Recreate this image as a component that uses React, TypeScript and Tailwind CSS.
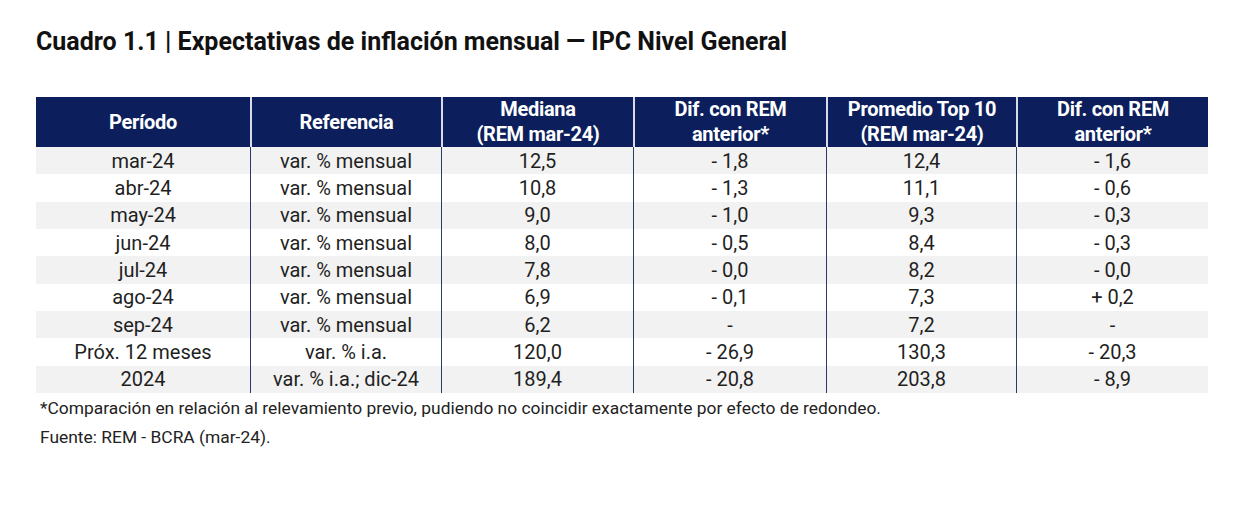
import React from 'react';

type Row = {
  periodo: string;
  referencia: string;
  mediana: string;
  difMediana: string;
  top10: string;
  difTop10: string;
};

const rows: Row[] = [
  { periodo: 'mar-24', referencia: 'var. % mensual', mediana: '12,5', difMediana: '- 1,8', top10: '12,4', difTop10: '- 1,6' },
  { periodo: 'abr-24', referencia: 'var. % mensual', mediana: '10,8', difMediana: '- 1,3', top10: '11,1', difTop10: '- 0,6' },
  { periodo: 'may-24', referencia: 'var. % mensual', mediana: '9,0', difMediana: '- 1,0', top10: '9,3', difTop10: '- 0,3' },
  { periodo: 'jun-24', referencia: 'var. % mensual', mediana: '8,0', difMediana: '- 0,5', top10: '8,4', difTop10: '- 0,3' },
  { periodo: 'jul-24', referencia: 'var. % mensual', mediana: '7,8', difMediana: '- 0,0', top10: '8,2', difTop10: '- 0,0' },
  { periodo: 'ago-24', referencia: 'var. % mensual', mediana: '6,9', difMediana: '- 0,1', top10: '7,3', difTop10: '+ 0,2' },
  { periodo: 'sep-24', referencia: 'var. % mensual', mediana: '6,2', difMediana: '-', top10: '7,2', difTop10: '-' },
  { periodo: 'Próx. 12 meses', referencia: 'var. % i.a.', mediana: '120,0', difMediana: '- 26,9', top10: '130,3', difTop10: '- 20,3' },
  { periodo: '2024', referencia: 'var. % i.a.; dic-24', mediana: '189,4', difMediana: '- 20,8', top10: '203,8', difTop10: '- 8,9' },
];

const headers = [
  ['Período'],
  ['Referencia'],
  ['Mediana', '(REM mar-24)'],
  ['Dif. con REM', 'anterior*'],
  ['Promedio Top 10', '(REM mar-24)'],
  ['Dif. con REM', 'anterior*'],
];

const cols = 'grid grid-cols-[214px_191px_192px_193px_190px_192px]';

export default function App() {
  return (
    <div className="w-[1238px] h-[510px] bg-white pl-[36px] pt-[27px] font-['Roboto',sans-serif] text-[#1f1f1f]">
      <h1 className="text-[25px] font-bold leading-[30px] text-[#111]">
        Cuadro 1.1 | Expectativas de inflación mensual — IPC Nivel General
      </h1>

      <div className="mt-[40px] w-[1172px]">
        <div className={`${cols} h-[50px] bg-[#0c1f5c]`}>
          {headers.map((lines, i) => (
            <div
              key={i}
              className={`flex flex-col items-center justify-center text-white font-bold text-[20px] leading-[25px] tracking-[-0.3px] ${
                i > 0 ? 'border-l-2 border-[#d9dce6]' : ''
              }`}
            >
              {lines.map((l) => (
                <span key={l}>{l}</span>
              ))}
            </div>
          ))}
        </div>

        {rows.map((r, idx) => {
          const cells = [r.periodo, r.referencia, r.mediana, r.difMediana, r.top10, r.difTop10];
          return (
            <div
              key={r.periodo}
              className={`${cols} h-[27.33px] ${idx % 2 === 0 ? 'bg-[#f2f2f2]' : 'bg-white'}`}
            >
              {cells.map((c, i) => (
                <div
                  key={i}
                  className={`flex items-center justify-center text-[20px] leading-none ${
                    i > 0 ? 'border-l-[1.5px] border-[#2c3a6b]' : ''
                  }`}
                >
                  {c}
                </div>
              ))}
            </div>
          );
        })}
      </div>

      <p className="mt-[5px] pl-[4px] text-[17.4px] leading-[20px] text-[#222]">
        *Comparación en relación al relevamiento previo, pudiendo no coincidir exactamente por efecto de redondeo.
      </p>
      <p className="mt-[9px] pl-[4px] text-[17.4px] leading-[20px] text-[#222]">Fuente: REM - BCRA (mar-24).</p>
    </div>
  );
}
